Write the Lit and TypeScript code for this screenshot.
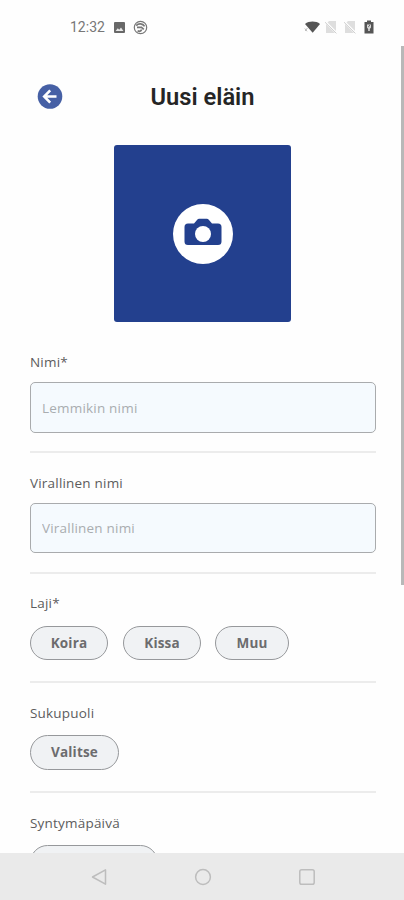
import { LitElement, html, css, svg } from "lit";
import { customElement, property } from "lit/decorators.js";

@customElement("form-section")
class FormSection extends LitElement {
  @property() label = "";

  static styles = css`
    :host {
      display: block;
      box-sizing: border-box;
      padding-top: 20px;
      border-bottom: 2px solid #ececec;
    }
    .label {
      height: 20px;
      line-height: 20px;
      font-size: 13.5px;
      letter-spacing: 0.2px;
      color: #5c5c5c;
      white-space: nowrap;
    }
    .control {
      display: flex;
      gap: 15px;
    }
  `;

  render() {
    return html`
      <div class="label">${this.label}</div>
      <div class="control"><slot></slot></div>
    `;
  }
}

@customElement("app-root")
class AppRoot extends LitElement {
  static styles = css`
    :host {
      display: flex;
      flex-direction: column;
      width: 404px;
      height: 900px;
      overflow: hidden;
      position: relative;
      background: #fefefe;
      font-family: "Open Sans", "Noto Sans", sans-serif;
    }
    svg {
      display: block;
      flex: none;
    }
    .status {
      flex: none;
      box-sizing: border-box;
      height: 46px;
      padding: 8px 28px 0 70px;
      display: flex;
      align-items: center;
      color: #707070;
    }
    .time {
      font: 14px/20px Roboto, sans-serif;
      width: 36px;
      color: #777;
    }
    .left,
    .right {
      display: flex;
      align-items: center;
    }
    .left {
      flex: 1;
      gap: 7px;
    }
    .right {
      gap: 5px;
    }
    .right svg:first-child {
      margin-right: -2px;
    }
    .content {
      flex: 1;
      min-height: 0;
      overflow: hidden;
      padding: 0 28px 0 30px;
    }
    .header {
      display: grid;
      grid-template-columns: 40px 1fr 40px;
      align-items: center;
      height: 99px;
      padding: 0 1px 0 0;
    }
    .header svg {
      margin-left: 7px;
      margin-top: 2px;
    }
    h1 {
      margin: 2px 0 0;
      font: 600 23.7px/30px Roboto, sans-serif;
      color: #252525;
      text-align: center;
      white-space: nowrap;
    }
    .photo {
      width: 177px;
      height: 177px;
      margin: 0 0 0 84px;
      border-radius: 3px;
      background: #23408e;
      display: flex;
      align-items: center;
      justify-content: center;
    }
    .sections {
      padding-top: 10px;
    }
    input {
      box-sizing: border-box;
      width: 100%;
      height: 50px;
      margin: 10px 0 19px;
      padding: 0 11px;
      border: 1px solid #a9abad;
      border-radius: 5px;
      background: #f5fafe;
      font: 13.5px "Open Sans", sans-serif;
      letter-spacing: 0.2px;
      outline: none;
    }
    .tall {
      height: 51px;
      margin-bottom: 18px;
    }
    input::placeholder {
      color: #a9adb0;
      opacity: 1;
    }
    .species {
      padding-top: 19px;
    }
    button {
      box-sizing: border-box;
      height: 35px;
      margin: 12px 0 21px;
      padding: 0 0 1px;
      border: 1px solid #96989b;
      border-radius: 18px;
      background: #f0f2f4;
      color: #6c6c6e;
      font: 700 13.5px "Open Sans", sans-serif;
      letter-spacing: 0.15px;
    }
    .species button {
      height: 34px;
      margin-top: 13px;
    }
    .w78 {
      width: 78px;
    }
    .w74 {
      width: 74px;
      margin-left: -1px;
    }
    .w89 {
      width: 89px;
    }
    .w128 {
      width: 128px;
    }
    .scroll {
      position: absolute;
      right: 0;
      top: 46px;
      width: 3px;
      height: 539px;
      background: #b8b8b8;
    }
    .nav {
      flex: none;
      height: 47px;
      background: #eaeaea;
      display: flex;
      align-items: center;
      justify-content: center;
      gap: 86px;
      padding: 1px 0 0 2px;
      box-sizing: border-box;
    }
  `;

  private noSim() {
    return svg`<svg width="14" height="14" viewBox="0 0 14 14">
      <path d="M5 1H12V13H2V4Z" fill="#dedede"/>
      <path d="M0.5 1L13 13.5" stroke="#fefefe" stroke-width="2.2"/>
      <path d="M1 2.2L12.4 13.4" stroke="#cfcfcf" stroke-width="1"/>
    </svg>`;
  }

  render() {
    return html`
      <div class="status">
        <div class="left">
          <span class="time">12:32</span>
          <svg width="13" height="13" viewBox="0 0 13 13">
            <rect x="1" y="1" width="11" height="11" rx="1" fill="#686868" />
            <path d="M2.6 10L4.8 7.2L6.2 8.8L8 6.6L10.4 10Z" fill="#e8e8e8" />
          </svg>
          <svg width="15" height="15" viewBox="0 0 15 15" fill="none" stroke="#777">
            <circle cx="7.5" cy="7.5" r="6.2" stroke-width="1.2" />
            <path d="M3.2 5.6C5.5 3 9.8 3.4 11.6 6.4M4 7.4H8.5L10.8 9.4M4.6 10.8C6.3 11.8 8 11.2 8.6 9.4" stroke-width="1.7" />
          </svg>
        </div>
        <div class="right">
          <svg width="17" height="14" viewBox="0 0 17 14">
            <path d="M1 4C5 0.8 12 0.8 16 4L8.7 12.8Z" fill="#555" />
            <path d="M0.8 8.5L3 11.3M3.4 8L1.2 11" stroke="#bbb" stroke-width="1" />
          </svg>
          ${this.noSim()} ${this.noSim()}
          <svg width="14" height="14" viewBox="0 0 14 14">
            <path d="M5 0.5H9V2H11.5V13.5H2.5V2H5Z" fill="#555" />
            <path d="M5 4.5H9V7.5L7.8 9V11H6.2V9L5 7.5Z" fill="#d8d8d8" />
            <path d="M6.3 6.8L8 5.2" stroke="#555" stroke-width="1" />
          </svg>
        </div>
      </div>

      <div class="content">
        <div class="header">
          <svg width="26" height="26" viewBox="0 0 26 26">
            <circle cx="13" cy="12.5" r="12.3" fill="#4660a5" />
            <path d="M19.5 12.5H7.5M13.2 6.4L7.2 12.5L13.2 18.6" fill="none" stroke="#fff" stroke-width="2.6" />
          </svg>
          <h1>Uusi eläin</h1>
        </div>
        <div class="photo">
          <svg width="60" height="60" viewBox="0 0 60 60">
            <circle cx="30" cy="30" r="30" fill="#fff" />
            <path
              d="M15 19.5H21L24 16C24.6 15.2 25.3 14.8 26.3 14.8H33.7C34.7 14.8 35.4 15.2 36 16L39 19.5H45Q48.5 19.5 48.5 23V37.5Q48.5 41 45 41H15Q11.5 41 11.5 37.5V23Q11.5 19.5 15 19.5Z"
              fill="#23408e"
            />
            <circle cx="30" cy="30" r="8" fill="#fff" />
          </svg>
        </div>
        <div class="sections">
          <form-section label="Nimi*">
            <input class="tall" placeholder="Lemmikin nimi" />
          </form-section>
          <form-section label="Virallinen nimi">
            <input placeholder="Virallinen nimi" />
          </form-section>
          <form-section class="species" label="Laji*">
            <button class="w78">Koira</button>
            <button class="w78">Kissa</button>
            <button class="w74">Muu</button>
          </form-section>
          <form-section label="Sukupuoli">
            <button class="w89">Valitse</button>
          </form-section>
          <form-section label="Syntymäpäivä">
            <button class="w128"></button>
          </form-section>
        </div>
      </div>
      <div class="scroll"></div>

      <div class="nav">
        <svg width="18" height="18" viewBox="0 0 18 18" fill="none" stroke="#bdbdbd" stroke-width="1.5">
          <path d="M15.5 1.8V16.2L2.5 9Z" stroke-linejoin="round" />
        </svg>
        <svg width="18" height="18" viewBox="0 0 18 18" fill="none" stroke="#bdbdbd" stroke-width="1.5">
          <circle cx="9" cy="9" r="7.4" />
        </svg>
        <svg width="18" height="18" viewBox="0 0 18 18" fill="none" stroke="#bdbdbd" stroke-width="1.5">
          <rect x="1.8" y="1.8" width="14.4" height="14.4" rx="1.8" />
        </svg>
      </div>
    `;
  }
}
